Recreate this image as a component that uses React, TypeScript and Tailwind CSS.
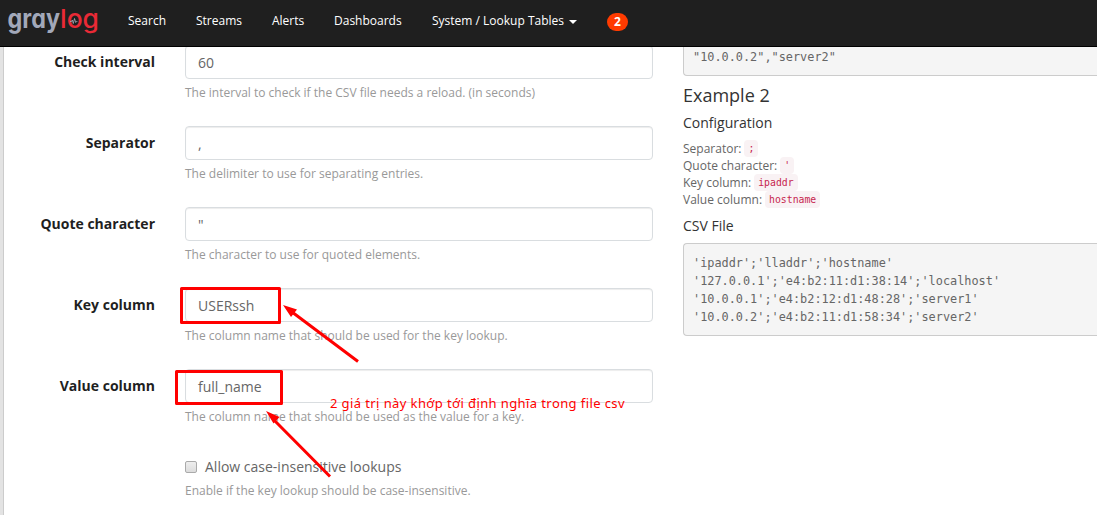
import type { ReactNode } from "react";

const fields = [
  { label: "Check interval", value: "60", help: "The interval to check if the CSV file needs a reload. (in seconds)" },
  { label: "Separator", value: ",", help: "The delimiter to use for separating entries." },
  { label: "Quote character", value: '"', help: "The character to use for quoted elements." },
  { label: "Key column", value: "USERssh", help: "The column name that should be used for the key lookup." },
  { label: "Value column", value: "full_name", help: "The column name that should be used as the value for a key." },
];

const csv = `'ipaddr';'lladdr';'hostname'
'127.0.0.1';'e4:b2:11:d1:38:14';'localhost'
'10.0.0.1';'e4:b2:12:d1:48:28';'server1'
'10.0.0.2';'e4:b2:11:d1:58:34';'server2'`;

function Logo() {
  return (
    <svg width="98" height="46" viewBox="0 0 98 46" className="block shrink-0 font-['Inter',sans-serif] text-[26px] [font-feature-settings:'cv11']" aria-label="graylog">
      <text x="0.500" y="28" fill="#a2a8b9" className="font-bold" textLength="52.500" lengthAdjust="spacingAndGlyphs">gray</text>
      <text x="53" y="28" fill="#e92a36" className="font-medium" textLength="39" lengthAdjust="spacingAndGlyphs">log</text>
      <path d="M63 21.500h1.500l.8-1.500 1 3.500 1.200-5 1.200 4 .7-1h1" fill="none" stroke="#a9adba" strokeWidth="0.8" />
    </svg>
  );
}

function Header() {
  return (
    <header className="z-10 flex h-[47px] shrink-0 border-b border-black bg-[#1f1f1f] pl-[7px] text-[12px] leading-[17px] text-white">
      <div className="w-[121px]">
        <Logo />
      </div>
      <nav className="flex items-start gap-[30px] pt-[12px]">
        <span className="w-[38px] whitespace-nowrap">Search</span>
        <span className="w-[46px] whitespace-nowrap">Streams</span>
        <span className="w-[32px] whitespace-nowrap">Alerts</span>
        <span className="w-[68px] whitespace-nowrap">Dashboards</span>
        <span className="flex w-[145px] items-center gap-[5px] whitespace-nowrap">
          System / Lookup Tables
          <svg width="8" height="4" viewBox="0 0 8 4" className="mt-[2px]">
            <path d="M0 0h8L4 4z" fill="#fff" />
          </svg>
        </span>
        <span className="mt-[1px] flex h-[18px] w-[21px] items-center justify-center rounded-full bg-[#ff3b00] text-[12px] font-bold leading-none">
          2
        </span>
      </nav>
    </header>
  );
}

function Code({ children }: { children: ReactNode }) {
  return (
    <code className="rounded-[4px] bg-[#f9f2f4] px-[4px] py-[3px] font-['DejaVu_Sans_Mono',monospace] text-[9.800px] leading-[11px] text-[#c7254e]">
      {children}
    </code>
  );
}

function Setting({ name, value }: { name: string; value: string }) {
  return (
    <p className="flex h-[17px] items-center gap-[3px]">
      {name}: <Code>{value}</Code>
    </p>
  );
}

function Annotations() {
  return (
    <>
      <svg width="1097" height="515" className="pointer-events-none absolute left-0 top-0 z-20">
        <g fill="none" stroke="#f00" strokeWidth="3">
          <rect x="181.500" y="288.500" width="98" height="34" strokeLinejoin="round" />
          <rect x="176.500" y="371.500" width="105" height="32" strokeLinejoin="round" />
          <path d="M358 361.500L292 312M330 476.500L273 419" />
        </g>
        <path d="M283 305l14 4.500-6 7.500zM266 411l13.500 6-6 6.500z" fill="#f00" />
      </svg>
      <div className="absolute left-[330px] top-[393px] z-20 whitespace-nowrap font-['Noto_Sans',sans-serif] text-[13px] leading-[20px] tracking-[0.4px] text-[#f00]">
        2 giá trị này khớp tới định nghĩa trong file csv
      </div>
    </>
  );
}

export default function App() {
  return (
    <div className="relative flex h-[515px] w-[1097px] flex-col overflow-hidden bg-white font-['Open_Sans',sans-serif] text-[12px] text-[#666]">
      <Header />
      <main className="flex min-h-0 flex-1 overflow-hidden">
        <div className="w-[4px] shrink-0 border-r border-[#ccc] bg-[#e3e3e3]" />
        <form className="-mt-[2px] w-[679px] shrink-0">
          {fields.map((f) => (
            <div key={f.label} className="flex h-[81px]">
              <label className="w-[151px] pt-[7px] text-right text-[14px] font-bold leading-[20px] text-[#1f1f1f]">{f.label}</label>
              <div className="ml-[30px] w-[468px]">
                <div className="flex h-[34px] items-center rounded-[4px] border border-[#d9dde0] bg-white px-[12px] pt-[2px] text-[14px] leading-[20px] text-[#666] shadow-[inset_0_1px_1px_rgba(0,0,0,0.075)]">
                  {f.value}
                </div>
                <p className="mt-[5px] leading-[17px] text-[#999]">{f.help}</p>
              </div>
            </div>
          ))}
          <div className="ml-[181px] pt-[7px]">
            <div className="flex items-center gap-[8px] text-[14px] leading-[20px]">
              <span className="h-[12px] w-[12px] rounded-[2px] border border-[#aaa] bg-linear-to-b from-[#eee] to-[#dcdcdc]" />
              Allow case-insensitive lookups
            </div>
            <p className="mt-[5px] leading-[17px] text-[#999]">Enable if the key lookup should be case-insensitive.</p>
          </div>
        </form>
        <section className="flex-1">
          <pre className="h-[29px] rounded-bl-[4px] border-b border-l border-[#ccc] bg-[#f5f5f5] pl-[9px] pt-[1px] font-['DejaVu_Sans_Mono',monospace] text-[11.870px] leading-[18px]">
            {'"10.0.0.2","server2"'}
          </pre>
          <h3 className="mt-[9px] text-[18px] leading-[20px] text-[#333]">Example 2</h3>
          <h4 className="mt-[10px] text-[14px] leading-[15px] text-[#333]">Configuration</h4>
          <div className="mt-[10px] leading-[17px]">
            <Setting name="Separator" value=";" />
            <Setting name="Quote character" value="'" />
            <Setting name="Key column" value="ipaddr" />
            <Setting name="Value column" value="hostname" />
          </div>
          <h4 className="mt-[10px] text-[14px] leading-[15px] text-[#333]">CSV File</h4>
          <pre className="mt-[10px] h-[93px] rounded-l-[4px] border-y border-l border-[#ccc] bg-[#f5f5f5] pl-[9px] pt-[10px] font-['DejaVu_Sans_Mono',monospace] text-[11.870px] leading-[18px]">
            {csv}
          </pre>
        </section>
      </main>
      <Annotations />
    </div>
  );
}
